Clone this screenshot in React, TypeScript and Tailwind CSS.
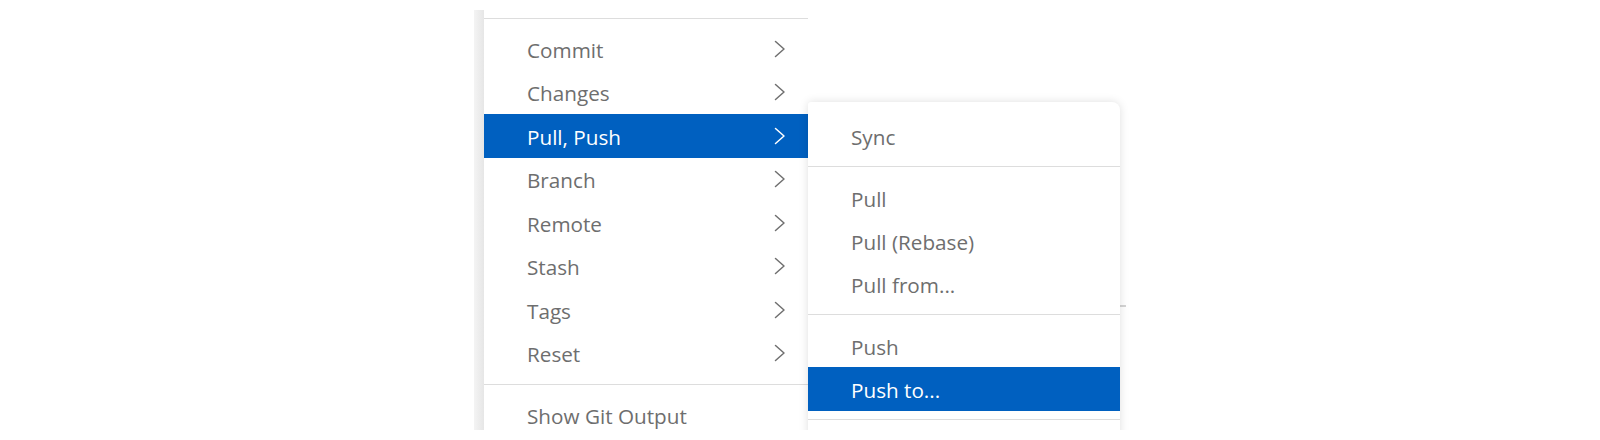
import React from 'react';

type Item = { label: string; sub?: boolean; active?: boolean } | 'sep';

const MAIN: Item[] = [
    { label: 'Commit', sub: true },
    { label: 'Changes', sub: true },
    { label: 'Pull, Push', sub: true, active: true },
    { label: 'Branch', sub: true },
    { label: 'Remote', sub: true },
    { label: 'Stash', sub: true },
    { label: 'Tags', sub: true },
    { label: 'Reset', sub: true },
    'sep',
    { label: 'Show Git Output' },
];

const SUB: Item[] = [
    { label: 'Sync' },
    'sep',
    { label: 'Pull' },
    { label: 'Pull (Rebase)' },
    { label: 'Pull from...' },
    'sep',
    { label: 'Push' },
    { label: 'Push to...', active: true },
    'sep',
];

function Chevron({ active }: { active?: boolean }) {
    return (
        <svg width="12" height="18" viewBox="0 0 12 18" fill="none" className={active ? 'text-white' : 'text-[#707070]'}>
            <path d="M1.5 1.5 L10 9 L1.5 16.5" stroke="currentColor" strokeWidth={1.5} strokeLinecap="round" strokeLinejoin="round" />
        </svg>
    );
}

function Separator() {
    return (
        <div className="h-[18.5px] flex items-center">
            <div className="h-px w-full bg-[#dddddd]" />
        </div>
    );
}

function MenuList({ items, rowClass }: { items: Item[]; rowClass: string }) {
    return (
        <>
            {items.map((item, i) => {
                if (item === 'sep') return <Separator key={i} />;
                return (
                    <div
                        key={item.label}
                        className={`${rowClass} flex items-center justify-between pl-[43px] pr-[22px] ${
                            item.active ? 'bg-[#0060c0] text-white' : 'text-[#6e6e6e]'
                        }`}
                    >
                        <span className="pt-[3px]">{item.label}</span>
                        {item.sub && <Chevron active={item.active} />}
                    </div>
                );
            })}
        </>
    );
}

export default function App() {
    return (
        <div className="w-[1600px] h-[440px] bg-white overflow-hidden relative">
            <div
                className="flex items-start h-[420px] mt-[10px] pl-[474px] overflow-hidden text-[20.7px] leading-none"
                style={{ fontFamily: '"Open Sans", "Noto Sans", sans-serif' }}
            >
                {/* left edge strip */}
                <div className="w-[10px] h-full bg-gradient-to-r from-[#f4f4f4] to-[#e6e6e6]" />

                {/* main menu */}
                <div className="w-[324px] h-full bg-white">
                    <div className="h-[8px]" />
                    <div className="h-px bg-[#dddddd]" />
                    <div className="h-[8px]" />
                    <MenuList items={MAIN} rowClass="h-[43.5px]" />
                </div>

                {/* submenu */}
                <div className="relative z-10 w-[312px] h-[340px] mt-[92px] bg-white rounded-tr-[8px] rounded-tl-[3px] pt-[12px] shadow-[0_0_10px_rgba(0,0,0,0.13)]">
                    <MenuList items={SUB} rowClass="h-[43.25px]" />
                </div>

                {/* bit of a panel behind the submenu */}
                <div className="w-[6px] h-[2px] mt-[295px] bg-[#d4d4d4]" />
            </div>
        </div>
    );
}
